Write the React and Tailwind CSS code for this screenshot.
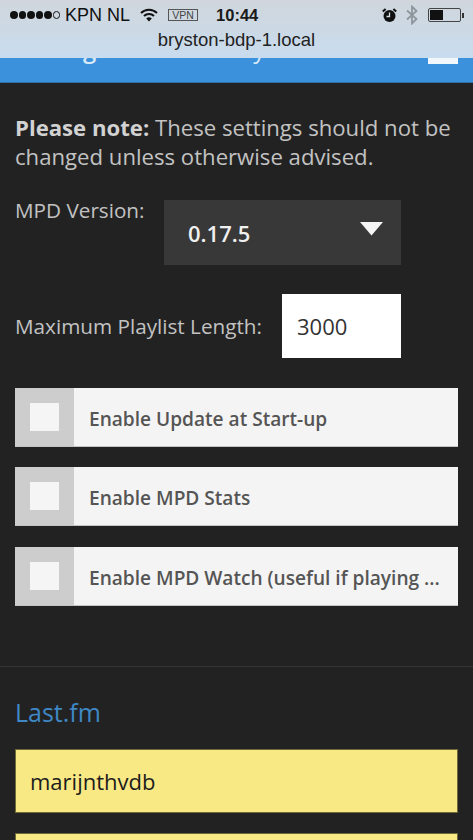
import React from "react";

const sans = "font-['Open_Sans',sans-serif]";
const ios = "font-['Liberation_Sans',sans-serif]";

function Check({ label, className = "" }) {
  return (
    <div className={`flex h-[59px] items-stretch bg-[#f4f4f4] border-b border-[#c4c4c4] ${className}`}>
      <div className="flex w-[59px] shrink-0 items-center justify-center bg-[#cdcdcd] pb-[1px] pr-[1px]">
        <div className="h-[28px] w-[29px] bg-[#f5f5f5]" />
      </div>
      <div className="flex min-w-0 flex-1 items-center pl-[15px] pr-[14px] pt-[4px] text-[19.1px] font-semibold text-[#555555] whitespace-nowrap">
        {label}
      </div>
    </div>
  );
}

export default function App() {
  return (
    <div className={`h-[840px] w-[473px] overflow-hidden bg-[#222222] ${sans}`}>
      <div className={`h-[58px] bg-gradient-to-b from-[#d0d6dc] to-[#c8dcee] ${ios} text-[#111]`}>
        <div className="flex h-[30px] items-center pl-[10px] pr-[9px]">
          <div className="flex items-center gap-[1px]">
            <span className="h-[7.5px] w-[7.5px] rounded-full bg-[#111]" />
            <span className="h-[7.5px] w-[7.5px] rounded-full bg-[#111]" />
            <span className="h-[7.5px] w-[7.5px] rounded-full bg-[#111]" />
            <span className="h-[7.5px] w-[7.5px] rounded-full bg-[#111]" />
            <span className="h-[7.5px] w-[7.5px] rounded-full bg-[#111]" />
            <span className="h-[7.5px] w-[7.5px] rounded-full border border-[#111]" />
          </div>
          <span className="ml-[5px] text-[18px] leading-none">KPN NL</span>
          <svg className="ml-[10px]" width="18" height="14" viewBox="0 0 18 14" fill="none" stroke="#111" strokeWidth="2">
            <path d="M1 5 A11.5 11.5 0 0 1 17 5" />
            <path d="M4 8 A7 7 0 0 1 14 8" />
            <path d="M9 13.5 L6.2 10.6 A4 4 0 0 1 11.8 10.6 Z" fill="#111" stroke="none" />
          </svg>
          <span className="ml-[10px] flex h-[12px] w-[30px] items-center justify-center border border-[#555] text-[10.5px] leading-none text-[#444]">VPN</span>
          <span className="ml-[18px] text-[16.5px] font-bold leading-none text-[#1a1a1a]">10:44</span>
          <svg className="ml-auto" width="15" height="15" viewBox="0 0 15 15">
            <circle cx="7.5" cy="8" r="6" fill="#111" />
            <path d="M0.8 3.6 L3.6 1 M14.2 3.6 L11.4 1" stroke="#111" strokeWidth="2" />
            <path d="M7.5 4.5 V8.5 H4.5" stroke="#d4dde4" strokeWidth="1.3" fill="none" />
          </svg>
          <svg className="ml-[9px]" width="12" height="20" viewBox="0 0 12 20" fill="none" stroke="#8d969d" strokeWidth="1.8">
            <path d="M1 5.5 L10.5 14 L6 18.5 V1.5 L10.5 6 L1 14.5" />
          </svg>
          <div className="ml-[10px] flex items-center">
            <div className="h-[14px] w-[33px] rounded-[2px] border border-[#444] p-[1px]">
              <div className="h-full w-[13px] bg-[#111]" />
            </div>
            <div className="ml-[1px] h-[5px] w-[2px] bg-[#333]" />
          </div>
        </div>
        <div className="text-center text-[18.5px] leading-[20px] text-[#222]">bryston-bdp-1.local</div>
      </div>

      <div className="relative h-[25px] overflow-hidden bg-[#3b91db] border-b border-[#2f70a6]">
        <div className="-mt-[23px] flex pl-[15px] text-[24px] leading-[28px] text-[#d7e9f8]">
          <span className="font-semibold">Settings</span>
          <span className="ml-[40px]">Music Player Daemon</span>
        </div>
        <div className="absolute right-[15px] top-0 h-[6px] w-[30px] bg-[#f2f7fc]" />
      </div>

      <div className="px-[15px] pt-[30px]">
        <p className="text-[22.15px] leading-[29px] text-[#c2c2c2] whitespace-nowrap">
          <strong className="font-bold text-[#d2d2d2]">Please note:</strong> These settings should not be
          <br />
          changed unless otherwise advised.
        </p>

        <div className="mt-[29px] flex items-start">
          <span className="mt-[-4px] w-[149px] text-[20.7px] leading-[28px] text-[#c2c2c2]">MPD Version:</span>
          <div className="flex h-[65px] w-[237px] items-start justify-between bg-[#383838] pl-[24px] pr-[18px]">
            <span className="mt-[19px] text-[22px] font-semibold leading-[28px] text-[#f0f0f0]">0.17.5</span>
            <svg className="mt-[22px]" width="23" height="14" viewBox="0 0 23 14">
              <path d="M0 0 H23 L11.5 13.5 Z" fill="#f5f5f5" />
            </svg>
          </div>
        </div>

        <div className="mt-[29px] flex items-center">
          <span className="w-[267px] text-[20.7px] leading-[28px] text-[#c2c2c2] whitespace-nowrap">Maximum Playlist Length:</span>
          <div className="flex h-[64px] w-[119px] items-center bg-white pl-[15px] text-[22px] text-[#333]">3000</div>
        </div>

        <div className="mt-[30px] w-[443px]">
          <Check label="Enable Update at Start-up" />
          <Check label="Enable MPD Stats" className="mt-[20px]" />
          <Check label="Enable MPD Watch (useful if playing ..." className="mt-[21px]" />
        </div>
      </div>

      <div className="mt-[60px] h-px bg-[#343434]" />

      <div className="px-[15px]">
        <h2 className="mt-[28px] text-[25px] font-normal leading-[34px] text-[#3f88c5]">Last.fm</h2>
        <div className="mt-[20px] flex h-[64px] w-[443px] items-center border border-[#6f6a3a] bg-[#f8e985] pl-[14px] text-[22px] text-[#1c1c1c]">marijnthvdb</div>
        <div className="mt-[20px] h-[64px] w-[443px] border border-[#6f6a3a] bg-[#f8e985]" />
      </div>
    </div>
  );
}
